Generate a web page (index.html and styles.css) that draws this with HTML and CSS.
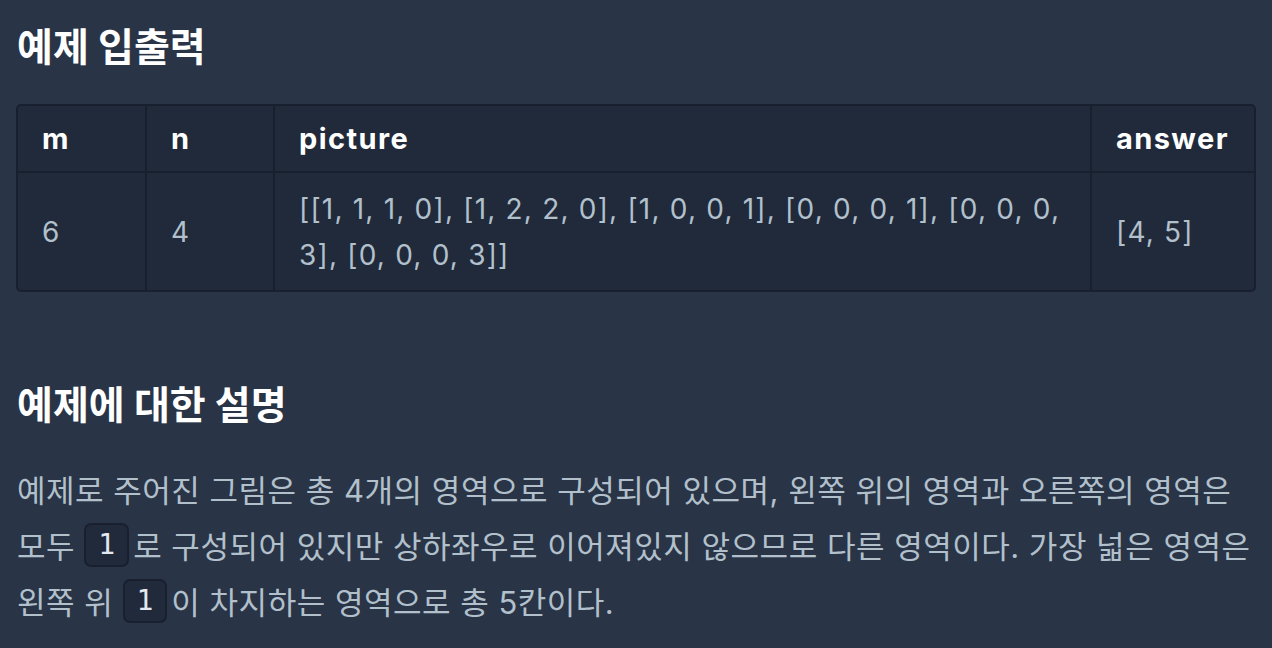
FILE: index.html
```html
<!DOCTYPE html>
<html lang="ko">
<head>
    <meta charset="UTF-8">
    <meta name="viewport" content="width=device-width, initial-scale=1.0">
    <title>예제 입출력</title>
    <link rel="stylesheet" href="styles.css">
</head>
<body>
    <div class="guide-section">
        <h5 class="section-title">예제 입출력</h5>
        <table class="io-table">
            <thead>
                <tr>
                    <th class="col-m">m</th>
                    <th class="col-n">n</th>
                    <th class="col-picture">picture</th>
                    <th class="col-answer">answer</th>
                </tr>
            </thead>
            <tbody>
                <tr>
                    <td>6</td>
                    <td>4</td>
                    <td>[[1, 1, 1, 0], [1, 2, 2, 0], [1, 0, 0, 1], [0, 0, 0, 1], [0, 0, 0, 3], [0, 0, 0, 3]]</td>
                    <td>[4, 5]</td>
                </tr>
            </tbody>
        </table>

        <h5 class="section-title second">예제에 대한 설명</h5>
        <p class="desc">예제로 주어진 그림은 총 4개의 영역으로 구성되어 있으며, 왼쪽 위의 영역과 오른쪽의 영역은 모두 <code>1</code>로 구성되어 있지만 상하좌우로 이어져있지 않으므로 다른 영역이다. 가장 넓은 영역은 왼쪽 위 <code>1</code>이 차지하는 영역으로 총 5칸이다.</p>
    </div>
</body>
</html>
```

FILE: styles.css
```css
* {
    margin: 0;
    padding: 0;
    box-sizing: border-box;
}

body {
    font-family: Inter, 'Noto Sans CJK KR', sans-serif;
    background-color: #293446;
    color: #b2c0cc;
}

.guide-section {
    padding: 22px 16px 0 16px;
}

.section-title {
    font-size: 39px;
    font-weight: 700;
    color: #ffffff;
    line-height: 50px;
    padding-left: 1px;
}

.section-title.second {
    margin-top: 88px;
}

/* Example table */
.io-table {
    width: 1240px;
    margin-top: 32px;
    border-collapse: separate;
    border-spacing: 0;
    background: #202a3b;
    border: 2px solid #182030;
    border-radius: 5px;
    font-size: 28px;
    text-align: left;
}

.io-table th,
.io-table td {
    padding: 0 24px;
    border-right: 2px solid #182030;
    vertical-align: middle;
}

.io-table th:last-child,
.io-table td:last-child {
    border-right: none;
}

.io-table th {
    height: 67px;
    color: #ffffff;
    font-size: 29px;
    font-weight: 700;
    letter-spacing: 1.4px;
    border-bottom: 2px solid #182030;
}

.io-table td {
    height: 117px;
    line-height: 46px;
    letter-spacing: 1.2px;
    color: #b2c0cc;
}

.col-m { width: 129px; }
.col-n { width: 128px; }
.col-answer { width: 162px; }

/* Description */
.desc {
    margin-top: 33px;
    padding-left: 1px;
    font-size: 31px;
    line-height: 56px;
    letter-spacing: 0.5px;
    word-break: keep-all;
}

.desc code {
    display: inline-block;
    font-family: 'DejaVu Sans Mono', monospace;
    font-size: 28px;
    line-height: 40px;
    letter-spacing: 0;
    color: #e4e9f0;
    background: #202a3b;
    border: 2px solid #182030;
    border-radius: 7px;
    padding: 0 12px;
    margin: 0 4px 0 0;
    vertical-align: 4px;
}
```
